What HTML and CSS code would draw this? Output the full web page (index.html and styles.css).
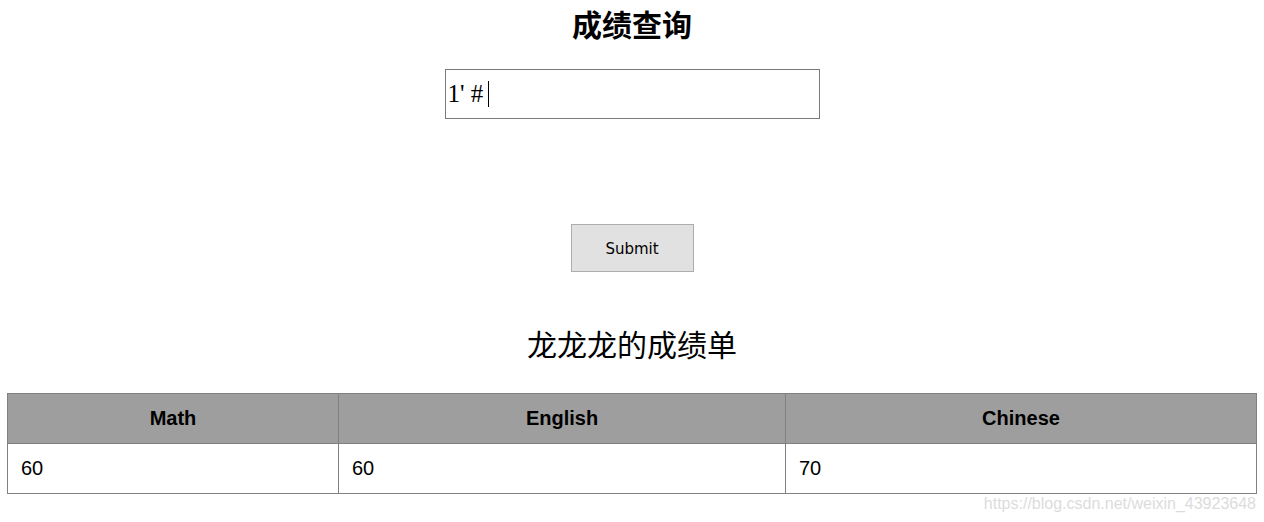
FILE: index.html
```html
<!DOCTYPE html>
<html lang="zh-CN">
<head>
  <meta charset="UTF-8" />
  <title>成绩查询</title>
  <link rel="stylesheet" href="styles.css">
</head>
<body>
  <div class="query">
    <h2>成绩查询</h2>
    <div class="field">
      <input type="text" id="name" value="1' #" />
      <span class="caret"></span>
    </div>
    <button type="button">Submit</button>
  </div>

  <h3 class="sheet-title">龙龙龙的成绩单</h3>
  <table class="scores">
    <tr>
      <th class="col-math">Math</th>
      <th class="col-english">English</th>
      <th>Chinese</th>
    </tr>
    <tr>
      <td>60</td>
      <td>60</td>
      <td>70</td>
    </tr>
  </table>
  <div class="watermark">https://blog.csdn.net/weixin_43923648</div>
</body>
</html>
```

FILE: styles.css
```css
body {
  margin: 7px;
  background: #fff;
  color: #000;
  font-family: "Liberation Sans", "Noto Sans CJK SC", sans-serif;
}
.query {
  display: flex;
  flex-direction: column;
  align-items: center;
}
.query h2 {
  margin: 0;
  height: 32px;
  line-height: 32px;
  font-size: 30px;
  font-weight: bold;
  font-family: "Noto Sans CJK SC", sans-serif;
}
.field {
  position: relative;
  margin-top: 30px;
}
.field input {
  box-sizing: border-box;
  width: 375px;
  height: 50px;
  padding: 0 2px;
  border: 1px solid #7a7a7a;
  font-family: "Liberation Serif", serif;
  font-size: 25px;
  color: #000;
  outline: none;
}
.caret {
  position: absolute;
  left: 43px;
  top: 12px;
  width: 1px;
  height: 26px;
  background: #000;
}
.query button {
  margin-top: 105px;
  width: 123px;
  height: 48px;
  padding-top: 3px;
  background: #e1e1e1;
  border: 1px solid #adadad;
  border-radius: 0;
  font-family: "DejaVu Sans", sans-serif;
  font-size: 15px;
  color: #000;
}
.sheet-title {
  margin: 51px 0 0;
  height: 40px;
  line-height: 40px;
  text-align: center;
  font-size: 30px;
  font-weight: normal;
  font-family: "Noto Sans CJK SC", sans-serif;
}
.scores {
  margin-top: 30px;
  width: 100%;
  border-collapse: collapse;
  font-size: 20px;
}
.scores th, .scores td {
  border: 1px solid #808080;
  height: 49px;
  padding: 0 13px;
}
.scores th {
  background: #9e9e9e;
  font-weight: bold;
}
.scores td {
  text-align: left;
}
.col-math { width: 304px; }
.col-english { width: 420px; }
.watermark {
  margin-top: 1px;
  text-align: right;
  padding-right: 1px;
  font-size: 16px;
  color: #dcdcdc;
}
```
